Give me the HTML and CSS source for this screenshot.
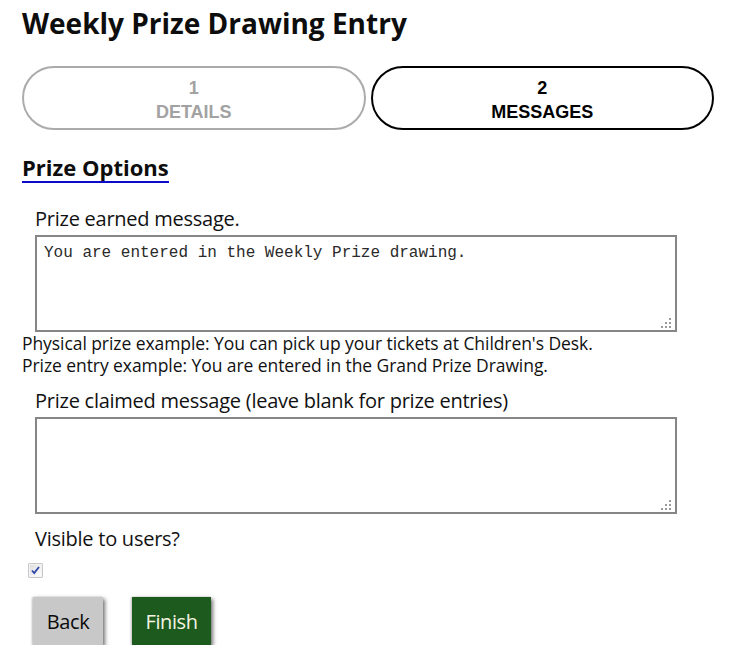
FILE: index.html
```html
<!DOCTYPE html>
<html lang="en">
<head>
<meta charset="utf-8">
<title>Weekly Prize Drawing Entry</title>
<link rel="stylesheet" href="styles.css">
</head>
<body>
<main class="page">
  <h1 class="title">Weekly Prize Drawing Entry</h1>

  <nav class="steps">
    <div class="step step-done"><span class="step-num">1</span><span class="step-name">DETAILS</span></div>
    <div class="step step-current"><span class="step-num">2</span><span class="step-name">MESSAGES</span></div>
  </nav>

  <h2 class="section-title">Prize Options</h2>

  <div class="field">
    <label class="field-label" for="earned">Prize earned message.</label>
    <div class="ta-wrap">
      <textarea id="earned" class="ta">You are entered in the Weekly Prize drawing.</textarea>
      <svg class="grip" width="12" height="10" viewBox="0 0 12 10" aria-hidden="true">
        <rect x="8" y="0" width="2" height="2" fill="#9a9a9a"/>
        <rect x="4" y="4" width="2" height="2" fill="#9a9a9a"/>
        <rect x="8" y="4" width="2" height="2" fill="#9a9a9a"/>
        <rect x="0" y="8" width="2" height="2" fill="#9a9a9a"/>
        <rect x="4" y="8" width="2" height="2" fill="#9a9a9a"/>
        <rect x="8" y="8" width="2" height="2" fill="#9a9a9a"/>
      </svg>
    </div>
  </div>
  <p class="help">Physical prize example: You can pick up your tickets at Children's Desk.<br>Prize entry example: You are entered in the Grand Prize Drawing.</p>

  <div class="field">
    <label class="field-label" for="claimed">Prize claimed message (leave blank for prize entries)</label>
    <div class="ta-wrap">
      <textarea id="claimed" class="ta"></textarea>
      <svg class="grip" width="12" height="10" viewBox="0 0 12 10" aria-hidden="true">
        <rect x="8" y="0" width="2" height="2" fill="#9a9a9a"/>
        <rect x="4" y="4" width="2" height="2" fill="#9a9a9a"/>
        <rect x="8" y="4" width="2" height="2" fill="#9a9a9a"/>
        <rect x="0" y="8" width="2" height="2" fill="#9a9a9a"/>
        <rect x="4" y="8" width="2" height="2" fill="#9a9a9a"/>
        <rect x="8" y="8" width="2" height="2" fill="#9a9a9a"/>
      </svg>
    </div>
  </div>

  <div class="field">
    <span class="field-label">Visible to users?</span>
  </div>
  <label class="check">
    <input type="checkbox" class="check-input" checked>
    <svg class="check-box" width="15" height="15" viewBox="0 0 15 15" aria-hidden="true">
      <defs>
        <linearGradient id="cbg" x1="0" y1="0" x2="1" y2="1">
          <stop offset="0" stop-color="#dcdcdc"/>
          <stop offset="1" stop-color="#ffffff"/>
        </linearGradient>
      </defs>
      <rect x="0.5" y="0.5" width="14" height="14" fill="#8e8f8f"/>
      <rect x="1.5" y="1.5" width="12" height="12" fill="url(#cbg)" stroke="#f4f4f4"/>
      <path d="M4 7.5 L6.2 10 L11 4" fill="none" stroke="#2a44a8" stroke-width="1.8"/>
    </svg>
  </label>

  <div class="actions">
    <button type="button" class="btn btn-back">Back</button>
    <button type="button" class="btn btn-finish">Finish</button>
  </div>
</main>
</body>
</html>
```

FILE: styles.css
```css
html, body {
  margin: 0;
  padding: 0;
  background: #ffffff;
}

body {
  font-family: "Open Sans", "Noto Sans", "DejaVu Sans", sans-serif;
  color: #111111;
}

.page {
  width: 692px;
  padding: 0 0 0 22px;
}

.title {
  margin: 5px 0 0;
  font-size: 28px;
  line-height: 36px;
  font-weight: 700;
  color: #0d0d0d;
  letter-spacing: 0;
}

.steps {
  display: grid;
  grid-template-columns: 1fr 1fr;
  gap: 5px;
  margin-top: 25px;
}

.step {
  height: 64px;
  box-sizing: border-box;
  border: 2px solid #000;
  border-radius: 32px;
  padding-top: 3px;
  display: flex;
  flex-direction: column;
  align-items: center;
  justify-content: center;
  font-family: "Liberation Sans", Arial, sans-serif;
  font-weight: bold;
  font-size: 18px;
  line-height: 24px;
  color: #000;
}

.step-done {
  border-color: #ababab;
  color: #a2a2a2;
}

.section-title {
  display: inline-block;
  margin: 24px 0 0;
  font-size: 22px;
  line-height: 27px;
  font-weight: 700;
  border-bottom: 2px solid #0a0ac8;
  color: #0d0d0d;
}

.field {
  padding-left: 13px;
}

.field:first-of-type {
  margin-top: 25px;
}

.field-label {
  display: block;
  font-size: 20px;
  line-height: 22px;
  letter-spacing: -0.25px;
  color: #111;
}

.ta-wrap {
  position: relative;
  width: 642px;
  margin-top: 5px;
}

.ta {
  display: block;
  width: 642px;
  height: 97px;
  box-sizing: border-box;
  margin: 0;
  border: 2px solid #868686;
  padding: 7px 7px;
  font-family: "Liberation Mono", "Courier New", monospace;
  font-size: 16px;
  line-height: 18px;
  color: #2a2a2a;
  resize: none;
  background: #fff;
  outline: none;
}

.grip {
  position: absolute;
  right: 4px;
  bottom: 4px;
}

.help {
  margin: 0 0 14px;
  font-size: 17.5px;
  line-height: 22px;
  letter-spacing: -0.07px;
  color: #111;
}

.field + .field {
  margin-top: 14px;
}

.check {
  display: block;
  margin: 13px 0 0 6px;
  width: 15px;
  height: 15px;
}

.check-input {
  position: absolute;
  opacity: 0;
  width: 1px;
  height: 1px;
  margin: 0;
}

.check-box {
  display: block;
}

.actions {
  display: flex;
  gap: 29px;
  margin: 19px 0 0 11px;
}

.btn {
  height: 48px;
  border: none;
  padding: 0;
  font-family: "Open Sans", "Noto Sans", sans-serif;
  font-size: 20px;
  letter-spacing: -0.4px;
  box-shadow: 2px 2px 4px rgba(0, 0, 0, 0.55), -1px 0 2px rgba(0, 0, 0, 0.2);
  cursor: pointer;
}

.btn-back {
  width: 70px;
  background: #c8c8c8;
  color: #0a0a0a;
}

.btn-finish {
  width: 79px;
  background: #1d5a1d;
  color: #f4f4e4;
}
```
